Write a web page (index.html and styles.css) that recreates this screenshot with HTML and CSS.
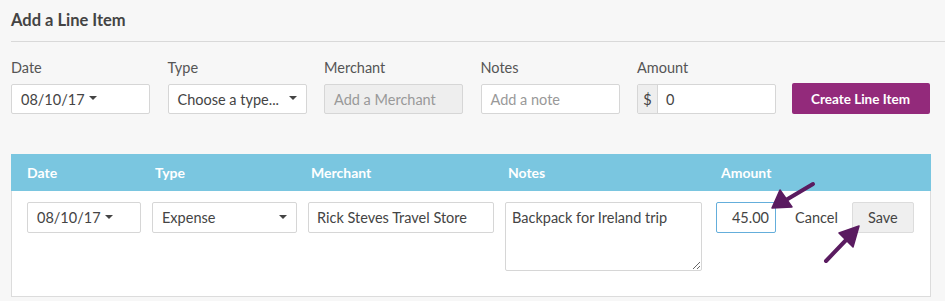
FILE: index.html
```html
<!DOCTYPE html>
<html>
<head>
<meta charset="utf-8">
<link rel="stylesheet" href="styles.css">
</head>
<body>
<div class="page">
  <h2 class="title">Add a Line Item</h2>
  <div class="rule"></div>
  <div class="form-row">
    <div class="field">
      <label class="lbl">Date</label>
      <div class="input"><span>08/10/17</span><span class="caret"></span></div>
    </div>
    <div class="field">
      <label class="lbl">Type</label>
      <div class="input select"><span>Choose a type...</span><span class="caret"></span></div>
    </div>
    <div class="field">
      <label class="lbl">Merchant</label>
      <div class="input disabled"><span class="ph">Add a Merchant</span></div>
    </div>
    <div class="field">
      <label class="lbl">Notes</label>
      <div class="input"><span class="ph">Add a note</span></div>
    </div>
    <div class="field">
      <label class="lbl">Amount</label>
      <div class="input group"><span class="addon">$</span><span class="gval">0</span></div>
    </div>
    <div class="field btn-field">
      <button class="btn-primary">Create Line Item</button>
    </div>
  </div>

  <div class="table">
    <div class="thead">
      <div class="th">Date</div>
      <div class="th off3">Type</div>
      <div class="th off3">Merchant</div>
      <div class="th off3">Notes</div>
      <div class="th off5">Amount</div>
    </div>
    <div class="tbody">
      <div class="td"><div class="input sm w-date"><span>08/10/17</span><span class="caret"></span></div></div>
      <div class="td"><div class="input sm select w-type"><span>Expense</span><span class="caret"></span></div></div>
      <div class="td"><div class="input sm w-merch"><span>Rick Steves Travel Store</span></div></div>
      <div class="td"><textarea class="notes">Backpack for Ireland trip</textarea></div>
      <div class="td actions">
        <div class="input sm amount"><span>45.00</span></div>
        <span class="cancel">Cancel</span>
        <button class="btn-save">Save</button>
      </div>
    </div>
  </div>
</div>
<svg class="arrows" width="945" height="301" viewBox="0 0 945 301">
  <g fill="#5a1b60" stroke="#5a1b60" stroke-linecap="round" stroke-linejoin="round">
    <line x1="813" y1="184" x2="786" y2="200" stroke-width="4"/>
    <polygon points="772,208 780,190 792,207" stroke-width="1.5"/>
    <line x1="826" y1="261" x2="848" y2="238" stroke-width="4"/>
    <polygon points="859,226 839,233 853,247" stroke-width="1.5"/>
  </g>
</svg>
</body>
</html>
```
FILE: styles.css
```css
* { box-sizing: border-box; }
html, body { margin: 0; padding: 0; }
body {
  background: #f7f7f7;
  font-family: Lato, "Open Sans", sans-serif;
  color: #444;
  width: 945px;
  height: 301px;
  overflow: hidden;
  position: relative;
}
.page { padding: 10px 0 0 11px; }
.title {
  margin: 0;
  font-size: 16.5px;
  font-weight: 700;
  color: #444;
  line-height: 20px;
}
.rule {
  margin-top: 11px;
  border-top: 1px solid #d9d9d9;
}
.form-row {
  display: grid;
  grid-template-columns: repeat(5, 139px) 138px;
  column-gap: 17.5px;
  margin-top: 17px;
}
.field { display: flex; flex-direction: column; }
.lbl {
  font-size: 14.5px;
  color: #555;
  line-height: 18px;
  margin-bottom: 7px;
}
.input {
  height: 30px;
  background: #fff;
  border: 1px solid #d6d6d6;
  border-radius: 2px;
  display: flex;
  align-items: center;
  padding: 0 9px;
  font-size: 14.5px;
  color: #444;
}
.input.select { justify-content: space-between; }
.input.disabled { background: #eeeeee; }
.ph { color: #999; }
.caret {
  display: inline-block;
  width: 0; height: 0;
  border-left: 4px solid transparent;
  border-right: 4px solid transparent;
  border-top: 4px solid #444;
  margin-left: 4px;
  margin-top: -2px;
}
.input.group { padding: 0; }
.addon {
  width: 20px;
  height: 100%;
  background: #eeeeee;
  border-right: 1px solid #d6d6d6;
  display: flex; align-items: center; justify-content: center;
}
.gval { padding-left: 8px; }
.btn-field { margin-left: -2px; justify-content: flex-end; }
.btn-primary {
  height: 31px;
  width: 138px;
  background: #932a7b;
  border: 0;
  border-radius: 2px;
  color: #fff;
  font-family: inherit;
  font-size: 13.5px;
  font-weight: 700;
}
.table {
  margin-top: 40px;
  width: 920px;
  background: #fff;
  border-left: 1px solid #dcdcdc;
  border-right: 1px solid #dcdcdc;
  border-bottom: 1px solid #dcdcdc;
}
.thead, .tbody {
  display: grid;
  grid-template-columns: 125px 156px 197px 211px 1fr;
  padding-left: 15px;
}
.thead {
  background: #7ac6e0;
  height: 37px;
  align-items: center;
  margin: 0 -1px;
  padding-left: 16px;
}
.th { color: #fff; font-weight: 700; font-size: 14px; }
.off3 { padding-left: 3px; }
.off5 { padding-left: 5px; }
.tbody { padding-top: 11px; height: 105px; }
.input.sm { height: 31px; }
.w-date { width: 114px; }
.w-type { width: 145px; }
.w-merch { width: 186px; padding: 0 8px; }
.notes {
  width: 197px;
  height: 69px;
  border: 1px solid #d6d6d6;
  border-radius: 2px;
  font-family: inherit;
  font-size: 14.5px;
  color: #444;
  padding: 6px 6px;
  margin: 0;
  display: block;
  resize: both;
}
.actions { display: flex; align-items: flex-start; }
.amount {
  width: 60px;
  border-color: #64aedb;
  justify-content: flex-end;
  padding: 0 6px;
}
.cancel {
  font-size: 14.5px;
  color: #444;
  margin-left: 19px;
  line-height: 31px;
}
.btn-save {
  margin-left: 14px;
  height: 31px;
  width: 62px;
  background: #efefef;
  border: 1px solid #dcdcdc;
  border-radius: 2px;
  font-family: inherit;
  font-size: 14.5px;
  color: #444;
}
.arrows { position: absolute; left: 0; top: 0; pointer-events: none; }
```
